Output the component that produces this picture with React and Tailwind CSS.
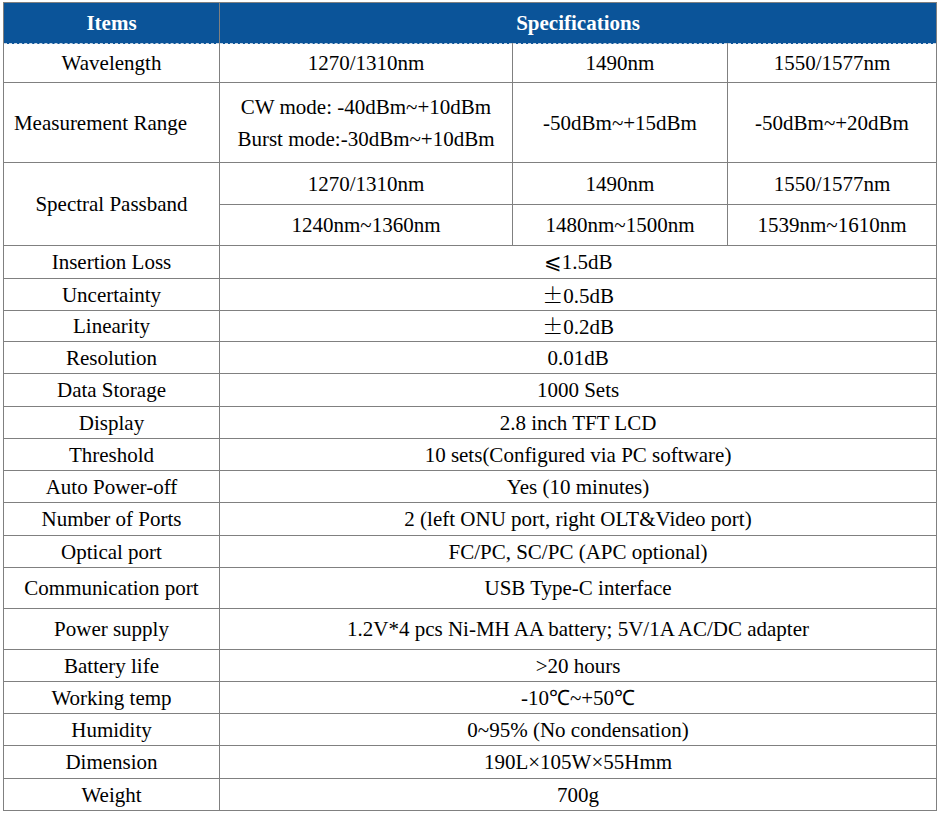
import React from "react";

const pm = <span className="font-['Noto_Sans_CJK_SC',sans-serif] font-light">±</span>;

const simple = [
  ["Insertion Loss", <>⩽1.5dB</>, "h-[33px]"],
  ["Uncertainty", <>{pm}0.5dB</>, "h-[32px]"],
  ["Linearity", <>{pm}0.2dB</>, "h-[31px]"],
  ["Resolution", "0.01dB", "h-[32px]"],
  ["Data Storage", "1000 Sets", "h-[33px]"],
  ["Display", "2.8 inch TFT LCD", "h-[32px]"],
  ["Threshold", "10 sets(Configured via PC software)", "h-[32px]"],
  ["Auto Power-off", "Yes (10 minutes)", "h-[32px]"],
  ["Number of Ports", "2 (left ONU port, right OLT&Video port)", "h-[33px]"],
  ["Optical port", "FC/PC, SC/PC (APC optional)", "h-[32px]"],
  ["Communication port", "USB Type-C interface", "h-[41px]"],
  ["Power supply", "1.2V*4 pcs Ni-MH AA battery; 5V/1A AC/DC adapter", "h-[41px]"],
  ["Battery life", ">20 hours", "h-[32px]"],
  ["Working temp", "-10\u2103~+50\u2103", "h-[32px]"],
  ["Humidity", "0~95% (No condensation)", "h-[32px]"],
  ["Dimension", "190L\u00d7105W\u00d755Hmm", "h-[33px]"],
  ["Weight", "700g", "h-[32px]"],
];

const td = "border border-[#808080] text-center align-middle p-0";

export default function App() {
  return (
    <div className="pl-[3px] pt-[2px] bg-white w-[940px] h-[815px] font-['Liberation_Serif',serif]">
      <table className="border-collapse table-fixed w-[933px] font-['Liberation_Serif',serif] text-[21px] text-black leading-[24px]">
        <colgroup>
          <col className="w-[216px]" />
          <col className="w-[293px]" />
          <col className="w-[215px]" />
          <col className="w-[209px]" />
        </colgroup>
        <tbody>
          <tr className="h-[41px] bg-[#0b5499] text-white font-bold">
            <td className={td + " border-b border-b-[#c9d7e6] border-dashed border-l-[#808080] border-t-[#808080] border-r-[#808080] [border-left-style:solid] [border-top-style:solid] [border-right-style:solid]"}>Items</td>
            <td colSpan={3} className={td + " border-b border-b-[#c9d7e6] border-dashed border-t-[#808080] border-r-[#808080] [border-top-style:solid] [border-right-style:solid]"}>Specifications</td>
          </tr>
          <tr className="h-[39px]">
            <td className={td + " border-t-0"}>Wavelength</td>
            <td className={td + " border-t-0"}>1270/1310nm</td>
            <td className={td + " border-t-0"}>1490nm</td>
            <td className={td + " border-t-0"}>1550/1577nm</td>
          </tr>
          <tr className="h-[80px]">
            <td className={td + " pr-[22px]"}>Measurement Range</td>
            <td className={td + " leading-[32px]"}>
              <div>CW mode: -40dBm~+10dBm</div>
              <div>Burst mode:-30dBm~+10dBm</div>
            </td>
            <td className={td}>-50dBm~+15dBm</td>
            <td className={td}>-50dBm~+20dBm</td>
          </tr>
          <tr className="h-[42px]">
            <td rowSpan={2} className={td}>Spectral Passband</td>
            <td className={td}>1270/1310nm</td>
            <td className={td}>1490nm</td>
            <td className={td}>1550/1577nm</td>
          </tr>
          <tr className="h-[41px]">
            <td className={td}>1240nm~1360nm</td>
            <td className={td}>1480nm~1500nm</td>
            <td className={td}>1539nm~1610nm</td>
          </tr>
          {simple.map(([k, v, h]) => (
            <tr key={k} className={h}>
              <td className={td}>{k}</td>
              <td colSpan={3} className={td}>{v}</td>
            </tr>
          ))}
        </tbody>
      </table>
    </div>
  );
}
